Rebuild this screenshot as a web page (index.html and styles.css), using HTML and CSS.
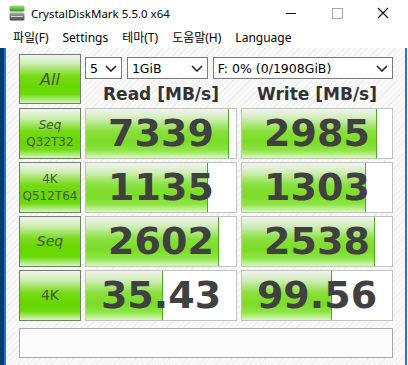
FILE: index.html
```html
<!DOCTYPE html>
<html lang="ko">
<head>
  <meta charset="UTF-8">
  <title>CrystalDiskMark 5.5.0 x64</title>
  <link rel="stylesheet" href="styles.css">
</head>
<body>

<div class="window">
  <!-- Title bar -->
  <div class="titlebar">
    <svg class="app-icon" width="16" height="16" viewBox="0 0 16 16">
      <defs>
        <linearGradient id="ig" x1="0" y1="0" x2="0" y2="1">
          <stop offset="0" stop-color="#9be86a"/>
          <stop offset="1" stop-color="#2f9a2a"/>
        </linearGradient>
        <linearGradient id="ib" x1="0" y1="0" x2="0" y2="1">
          <stop offset="0" stop-color="#a9a9a9"/>
          <stop offset="1" stop-color="#4a4a4a"/>
        </linearGradient>
      </defs>
      <rect x="0.5" y="0.5" width="15" height="6" rx="1.5" fill="url(#ig)"/>
      <rect x="0.5" y="7.5" width="15" height="8" rx="1.5" fill="url(#ib)"/>
      <rect x="2" y="11" width="12" height="1" fill="#d0d0d0"/>
    </svg>
    <span class="title-text">CrystalDiskMark 5.5.0 x64</span>
    <div class="win-buttons">
      <svg width="46" height="26" viewBox="0 0 46 26"><rect x="18" y="13" width="10" height="1" fill="#111"/></svg>
      <svg width="46" height="26" viewBox="0 0 46 26"><rect x="18.5" y="8.5" width="10" height="10" fill="none" stroke="#aaa"/></svg>
      <svg width="46" height="26" viewBox="0 0 46 26"><path d="M18 8 L28 18 M28 8 L18 18" stroke="#111" stroke-width="1.1"/></svg>
    </div>
  </div>

  <!-- Menu bar -->
  <div class="menubar">
    <span class="menu-item">파일(F)</span>
    <span class="menu-item">Settings</span>
    <span class="menu-item">테마(T)</span>
    <span class="menu-item">도움말(H)</span>
    <span class="menu-item">Language</span>
  </div>

  <!-- Client area -->
  <div class="desk">
    <div class="client">
      <div class="board">
        <div class="btn btn-all"><span class="italic">All</span></div>

        <div class="selects">
          <div class="select sel-count">
            <span>5</span>
            <svg class="chev" width="12" height="7" viewBox="0 0 12 7"><path d="M1 1 L6 6 L11 1" fill="none" stroke="#222" stroke-width="1.6"/></svg>
          </div>
          <div class="select sel-size">
            <span>1GiB</span>
            <svg class="chev" width="12" height="7" viewBox="0 0 12 7"><path d="M1 1 L6 6 L11 1" fill="none" stroke="#222" stroke-width="1.6"/></svg>
          </div>
          <div class="select sel-drive">
            <span>F: 0% (0/1908GiB)</span>
            <svg class="chev" width="12" height="7" viewBox="0 0 12 7"><path d="M1 1 L6 6 L11 1" fill="none" stroke="#222" stroke-width="1.6"/></svg>
          </div>
        </div>

        <div class="head">Read [MB/s]</div>
        <div class="head">Write [MB/s]</div>

        <!-- Seq Q32T32 -->
        <div class="btn"><span class="italic">Seq</span><span>Q32T32</span></div>
        <div class="value"><div class="bar" style="width: 142px"></div><span class="num">7339</span></div>
        <div class="value"><div class="bar" style="width: 134px"></div><span class="num">2985</span></div>

        <!-- 4K Q512T64 -->
        <div class="btn"><span>4K</span><span>Q512T64</span></div>
        <div class="value"><div class="bar" style="width: 121px"></div><span class="num">1135</span></div>
        <div class="value"><div class="bar" style="width: 123px"></div><span class="num">1303</span></div>

        <!-- Seq -->
        <div class="btn btn-big"><span class="italic">Seq</span></div>
        <div class="value"><div class="bar" style="width: 132px"></div><span class="num">2602</span></div>
        <div class="value"><div class="bar" style="width: 132px"></div><span class="num">2538</span></div>

        <!-- 4K -->
        <div class="btn btn-big"><span>4K</span></div>
        <div class="value"><div class="bar" style="width: 76px"></div><span class="num">35.43</span></div>
        <div class="value"><div class="bar" style="width: 89px"></div><span class="num">99.56</span></div>
      </div>

      <div class="message"></div>
    </div>
  </div>
</div>

</body>
</html>
```

FILE: styles.css
```css
html, body {
  margin: 0;
  padding: 0;
}
body {
  width: 408px;
  height: 365px;
  overflow: hidden;
  background-color: #fff;
  font-family: "Noto Sans", "Noto Sans CJK KR", sans-serif;
  color: #000;
}
.window {
  display: flex;
  flex-direction: column;
  height: 365px;
}
/* Title bar */
.titlebar {
  height: 26px;
  display: flex;
  align-items: center;
  background-color: #fff;
}
.app-icon {
  margin-left: 9px;
  margin-right: 6px;
}
.title-text {
  font-size: 11.5px;
  color: #000;
}
.win-buttons {
  margin-left: auto;
  display: flex;
  margin-right: 2px;
}
.win-buttons svg {
  display: block;
}
/* Menu bar */
.menubar {
  height: 22px;
  display: flex;
  align-items: center;
  padding-left: 6px;
  background-color: #fff;
}
.menu-item {
  font-size: 12px;
  padding: 0 7px;
  color: #000;
}
/* Client */
.desk {
  flex: 1;
  display: flex;
  background: linear-gradient(90deg, #0c3a6c 4px, #fff 4px);
}
.client {
  flex: 1;
  margin-left: 4px;
  margin-right: 1px;
  border-left: 2px solid #1a78d4;
  border-right: 2px solid #1a78d4;
  padding: 6px 12px 0 13px;
  background: repeating-linear-gradient(135deg, #f9f9f9 0 3px, #efefef 3px 4px);
}
.board {
  display: grid;
  grid-template-columns: 62px 152px 152px;
  grid-template-rows: 27px 21px repeat(4, 51px);
  column-gap: 4px;
  row-gap: 3px;
}
.btn {
  box-sizing: border-box;
  border: 1px solid #6d7f66;
  display: flex;
  flex-direction: column;
  align-items: center;
  justify-content: center;
  font-family: "DejaVu Sans", sans-serif;
  font-size: 12px;
  line-height: 17px;
  color: #4c5646;
  background: linear-gradient(#f4f4f4 0%, #cdeeb2 18%, #76da14 45%, #66d800 68%, #6cda0c 82%, #d6f7bc 100%);
}
.btn-all {
  grid-row: 1 / 3;
  height: 50px;
  font-size: 16px;
}
.btn-big {
  font-size: 14px;
}
.italic {
  font-style: italic;
}
.selects {
  grid-column: 2 / 4;
  display: flex;
  gap: 5px;
  padding-top: 3px;
}
.select {
  box-sizing: border-box;
  height: 22px;
  border: 1px solid #7a7a7a;
  background-color: #fff;
  display: flex;
  align-items: center;
  padding: 0 4px 0 4px;
  font-family: "DejaVu Sans", sans-serif;
  font-size: 12.5px;
  color: #000;
}
.select .chev {
  margin-left: auto;
}
.sel-count {
  width: 37px;
}
.sel-size {
  width: 81px;
}
.sel-drive {
  width: 181px;
}
.head {
  font-family: "DejaVu Sans", sans-serif;
  font-weight: bold;
  font-size: 17px;
  line-height: 21px;
  text-align: center;
  color: #333;
}
.value {
  box-sizing: border-box;
  border: 1px solid #c2c2c2;
  background-color: #fff;
  display: grid;
  padding: 0;
}
.bar,
.num {
  grid-area: 1 / 1;
}
.bar {
  justify-self: start;
  height: 100%;
  border-right: 1px solid #4eaa1e;
  background: linear-gradient(#f1f3ef 0%, #d3eebd 18%, #88e03c 45%, #7cdc28 68%, #8ee446 84%, #d8f8bf 100%);
}
.num {
  place-self: center;
  font-family: "DejaVu Sans", sans-serif;
  font-weight: bold;
  font-size: 38px;
  line-height: 49px;
  color: #404040;
}
.message {
  box-sizing: border-box;
  margin-top: 7px;
  height: 30px;
  width: 374px;
  border: 1px solid #a8a8a8;
  background-color: #fbfbfb;
}
```
